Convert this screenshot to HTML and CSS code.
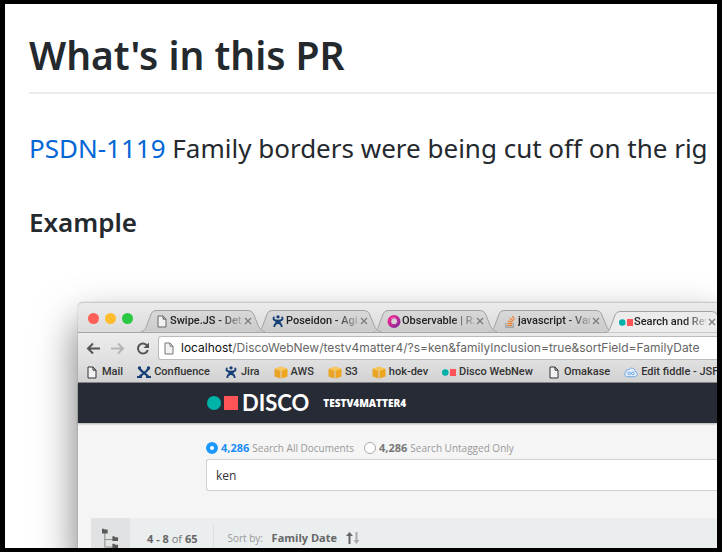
FILE: index.html
```
<!DOCTYPE html>
<html lang="en">
<head>
<meta charset="utf-8">
<title>What's in this PR</title>
<link rel="stylesheet" href="styles.css">
</head>
<body>
<svg class="defs" aria-hidden="true">
  <defs>
    <linearGradient id="tabfill" x1="0" y1="0" x2="0" y2="1"><stop offset="0" stop-color="#d9d9d9"/><stop offset="1" stop-color="#cbcbcb"/></linearGradient>
    <linearGradient id="rx" x1="0" y1="0" x2="1" y2="1"><stop offset="0" stop-color="#f0258f"/><stop offset="1" stop-color="#8a2a9b"/></linearGradient>
  </defs>
  <symbol id="page" viewBox="0 0 10 13"><path d="M1 1h5l3 3.200v7.800H1zM6 1v3.200h3" fill="#f2f2f2" stroke="currentColor" stroke-width="1"/></symbol>
  <symbol id="tab" viewBox="0 0 126 22"><path d="M0 21.500C4 21 4.500 19 6 15L10 4Q11.500.5 15 .5H107Q111 .5 112.500 4L117 15C119 19.500 120 21 124 21.500"/></symbol>
  <symbol id="jira" viewBox="0 0 12 14"><g fill="none" stroke="#173f77" stroke-width="2"><path d="M1 3c0 3 2 3 5 3s5 0 5-3M6 6v3M2 13c0-3 1-4 4-5 3 1 4 2 4 5M3 7l6 3M9 7l-6 3"/></g><circle cx="6" cy="2" r="1.800" fill="#173f77"/><circle cx="1.500" cy="2.500" r="1" fill="#173f77"/><circle cx="10.500" cy="2.500" r="1" fill="#173f77"/></symbol>
  <symbol id="conf" viewBox="0 0 14 13"><path d="M2 1.500c2 5 6 5 10 10M12 1.500C10 7 5 7 2 11.500" fill="none" stroke="#173f77" stroke-width="2.200"/><path d="M0 10h5v2H0zM9 10h5v2H9z" fill="#173f77"/><circle cx="2.500" cy="2" r="1.700" fill="#173f77"/><circle cx="11.500" cy="2" r="1.700" fill="#173f77"/></symbol>
  <symbol id="aws" viewBox="0 0 13 13"><path d="M0 3l6-2v11.500L0 10.500z" fill="#e9a425"/><path d="M7 1l6 2v7.500l-6 2z" fill="#f0a51f"/><path d="M0 3l6.500-2.500L13 3 6.500 5z" fill="#f8c75b"/></symbol>
  <symbol id="dots" viewBox="0 0 14 7"><circle cx="3.300" cy="3.500" r="3.300" fill="#00b0a8"/><path d="M8 0h6v7H8z" fill="#ff5357"/></symbol>
  <symbol id="cross" viewBox="0 0 8 8"><path d="M1 1l6 6M7 1L1 7" stroke="#7b7b7b" stroke-width="1.300"/></symbol>
</svg>
<main class="comment">
  <h1>What's in this PR</h1>
  <p><a href="#psdn-1119">PSDN-1119</a> Family borders were being cut off on the rig</p>
  <h4>Example</h4>
  <section class="window">
    <div class="tabs">
      <div class="lights"><i class="red"></i><i class="amber"></i><i class="green"></i></div>
      <div class="tab"><svg class="shape"><use href="#tab"/></svg><svg class="fav"><use href="#page"/></svg><span class="title">Swipe.JS - Dete</span><button aria-label="Close tab"><svg><use href="#cross"/></svg></button></div>
      <div class="tab"><svg class="shape"><use href="#tab"/></svg><svg class="fav"><use href="#jira"/></svg><span class="title">Poseidon - Agil</span><button aria-label="Close tab"><svg><use href="#cross"/></svg></button></div>
      <div class="tab"><svg class="shape"><use href="#tab"/></svg><svg class="fav" viewBox="0 0 14 14"><circle cx="7" cy="7" r="5" fill="none" stroke="url(#rx)" stroke-width="4"/><path d="M4 4c4-2 6 0 6 4" fill="none" stroke="#f8b6df" stroke-width="1"/><circle cx="7.500" cy="7.500" r="2" fill="#d5d5d5"/></svg><span class="title">Observable | Rx</span><button aria-label="Close tab"><svg><use href="#cross"/></svg></button></div>
      <div class="tab"><svg class="shape"><use href="#tab"/></svg><svg class="fav" viewBox="0 0 12 14"><path d="M1.500 8.500v4.500h8V8.500" fill="none" stroke="#999" stroke-width="1.200"/><path d="M3 11.300h5M3.200 9l5 .6M4 6.200l4.600 1.800M5.700 3.500l3.900 3M8.500 1l2.300 4.200" stroke="#ee7d2c" stroke-width="1.300"/></svg><span class="title">javascript - Var</span><button aria-label="Close tab"><svg><use href="#cross"/></svg></button></div>
      <div class="tab active"><svg class="shape"><use href="#tab"/></svg><svg class="fav"><use href="#dots"/></svg><span class="title">Search and Rev</span><button aria-label="Close tab"><svg><use href="#cross"/></svg></button></div>
    </div>
    <div class="toolbar">
      <button aria-label="Back"><svg viewBox="0 0 14 12"><path d="M7 1L2 6l5 5M2 6h12" fill="none" stroke="#555" stroke-width="2"/></svg></button>
      <button aria-label="Forward"><svg viewBox="0 0 14 12"><path d="M7 1l5 5-5 5M12 6H0" fill="none" stroke="#b5b5b5" stroke-width="2"/></svg></button>
      <button aria-label="Reload"><svg viewBox="0 0 14 13"><path d="M11 3.500A5 5 0 1 0 11.800 8" fill="none" stroke="#555" stroke-width="2"/><path d="M13 .5V6H7.500z" fill="#555"/></svg></button>
      <div class="address"><svg class="page"><use href="#page"/></svg><span><b>localhost</b>/DiscoWebNew/testv4matter4/?s=ken&amp;familyInclusion=true&amp;sortField=FamilyDate</span></div>
    </div>
    <nav class="bookmarks">
      <a href="#mail"><svg><use href="#page"/></svg>Mail</a>
      <a href="#confluence"><svg><use href="#conf"/></svg>Confluence</a>
      <a href="#jira-board"><svg><use href="#jira"/></svg>Jira</a>
      <a href="#aws-console"><svg><use href="#aws"/></svg>AWS</a>
      <a href="#s3"><svg><use href="#aws"/></svg>S3</a>
      <a href="#hok"><svg><use href="#aws"/></svg>hok-dev</a>
      <a href="#disco"><svg><use href="#dots"/></svg>Disco WebNew</a>
      <a href="#omakase"><svg><use href="#page"/></svg>Omakase</a>
      <a href="#fiddle"><svg viewBox="0 0 15 12"><path d="M4 10.500C0 10.500 0 6 2.300 5.500 2 3 4 2.500 5 3.300c2-3.500 7-2 6.700 1.500C15 5.500 15 10.500 11.500 10.500z" fill="#e3eefb" stroke="#68a3e5"/><path d="M7.500 7c-1.500-2-3.500-1.500-3.500 0s2 2 3.500 0 3.500-1.500 3.500 0-2 2-3.500 0z" fill="none" stroke="#68a3e5"/></svg>Edit fiddle - JSFi</a>
    </nav>
    <header class="appbar">
      <svg class="logo" viewBox="0 0 31 14"><circle cx="7" cy="7" r="7" fill="#00b3a9"/><path d="M17 0h14v14H17z" fill="#ff5358"/></svg>
      <span class="brand">DISCO</span><span class="matter">TESTV4MATTER4</span>
    </header>
    <form class="search">
      <div class="scopes">
        <label><input type="radio" name="scope" checked><b class="on">4,286</b> Search All Documents</label>
        <label><input type="radio" name="scope"><b>4,286</b> Search Untagged Only</label>
      </div>
      <input class="query" type="text" value="ken" aria-label="Search">
    </form>
    <div class="results">
      <button class="tree" aria-label="Folders"><svg viewBox="0 0 18 24"><path d="M3 4v15.500h10M3 11.500h9" fill="none" stroke="#888" stroke-width="1"/><path d="M0 0h2l1 1h3v4H0zM11 8h2l1 1h3v4h-6zM11 16h2l1 1h3v4h-6z" fill="#5b5b5b"/></svg></button>
      <span class="count"><b>4 - 8</b> of <b>65</b></span>
      <span class="sort">Sort by: <b>Family Date</b></span>
      <svg class="arrows" viewBox="0 0 14 12"><path d="M3.500 12V3" stroke="#666" stroke-width="2"/><path d="M0 4l3.500-4L7 4z" fill="#666"/><path d="M10.500 0v9" stroke="#aaa" stroke-width="2"/><path d="M7.500 8l3 4 3-4z" fill="#aaa"/></svg>
    </div>
  </section>
</main>
</body>
</html>
```

FILE: styles.css
```
* { box-sizing: border-box; }
body {
  margin: 0;
  height: 100vh;
  overflow: hidden;
  border: solid #000;
  border-width: 4px 5px;
  background: #fff;
  color: #24292e;
  font-family: "Open Sans", sans-serif;
}
.defs { position: absolute; width: 0; height: 0; }
.comment { height: 100%; overflow: hidden; padding: 25px 0 0 24px; }
h1 {
  margin: 0 0 34px;
  padding-bottom: 11px;
  border-bottom: 2px solid #eaecef;
  font: 600 39px/52px "Noto Sans", sans-serif;
}
p { margin: 0 0 38px; font: 26px/40px "Noto Sans", sans-serif; white-space: nowrap; }
p a { color: #0366d6; text-decoration: none; }
h4 { margin: 0 0 64px; font: 600 26px/32px "Noto Sans", sans-serif; }
button { display: flex; border: 0; padding: 0; background: none; }

.window {
  margin-left: 49px;
  border-radius: 5px 0 0 0;
  background: #f5f5f5;
  box-shadow: 0 0 1px rgba(0,0,0,.5), 0 20px 40px rgba(0,0,0,.55);
}
.tabs {
  display: flex;
  align-items: flex-end;
  height: 31px;
  border-top: 1px solid #ccc;
  border-bottom: 1px solid #a5a5a5;
  border-radius: 5px 0 0 0;
  background: linear-gradient(#ebebeb, #dcdcdc);
}
.lights { display: flex; flex: none; gap: 6px; width: 63px; padding: 0 0 8px 10px; }
.lights i { width: 11px; height: 11px; border-radius: 50%; }
.red { background: #ff5f57; }
.amber { background: #ffbd2e; }
.green { background: #28c940; }
.tab {
  position: relative;
  display: flex;
  flex: none;
  align-items: center;
  width: 116px;
  height: 22px;
  padding-left: 14px;
  font: 500 11px/20px Roboto, sans-serif;
  color: #222;
}
.tab:nth-child(2) { z-index: 5; }
.tab:nth-child(3) { z-index: 4; }
.tab:nth-child(4) { z-index: 3; }
.tab:nth-child(5) { z-index: 2; }
.tab.active { z-index: 6; margin-bottom: -1px; }
.shape { position: absolute; left: 0; top: 0; z-index: -1; width: 126px; height: 22px; fill: url(#tabfill); stroke: #a2a2a2; }
.active .shape { fill: #ececec; }
.fav { flex: none; width: 14px; height: 13px; color: #666; }
.title {
  width: 72px;
  overflow: hidden;
  margin-left: 1px;
  white-space: nowrap;
  mask-image: linear-gradient(90deg, #000 50px, transparent 76px);
}
.tab button { margin-left: 2px; }
.tab button svg { width: 8px; height: 8px; }

.toolbar { display: flex; align-items: center; gap: 11px; padding: 3px 0 2px 8px; background: linear-gradient(#ececec, #dfdfdf); }
.toolbar button svg { width: 14px; height: 13px; }
.address {
  display: flex;
  flex: 1;
  align-items: center;
  gap: 7px;
  min-width: 0;
  height: 24px;
  margin-left: -3px;
  padding-left: 5px;
  border: 1px solid #bbb;
  border-right: 0;
  border-radius: 3px 0 0 3px;
  background: #fff;
  color: #666;
  font: 12px/20px Inter, sans-serif;
  white-space: nowrap;
}
.address b { font-weight: 400; color: #111; }
.page { width: 10px; height: 13px; color: #777; }
.bookmarks {
  display: flex;
  gap: 14px;
  height: 21px;
  overflow: hidden;
  padding-left: 7px;
  border-bottom: 1px solid #888;
  background: linear-gradient(#dfdfdf, #d2d2d2);
  font: 500 11px/18px Roboto, sans-serif;
}
.bookmarks a { display: flex; flex: none; align-items: center; gap: 3px; color: #333; text-decoration: none; }
.bookmarks svg { width: 14px; height: 13px; }

.appbar {
  display: flex;
  align-items: center;
  height: 40px;
  padding-left: 129px;
  background: #272b35;
  color: #fff;
  box-shadow: 0 1px 2px rgba(0,0,0,.3);
}
.logo { width: 31px; height: 14px; }
.brand { margin-left: 4px; font: 700 22px/26px Lato, sans-serif; }
.matter { margin-left: 14px; font-size: 10px; font-weight: 800; }
.search { padding: 17px 0 27px 128px; }
.scopes { display: flex; gap: 10px; color: #999; font-size: 10px; line-height: 16px; white-space: nowrap; }
.scopes label { display: flex; align-items: center; gap: 3px; }
.scopes b { color: #777; font-size: 11px; }
.scopes .on { color: #1c8df5; }
.scopes input { appearance: none; width: 12px; height: 12px; margin: 0; border: 1px solid #aaa; border-radius: 50%; background: #fff; }
.scopes input:checked { border: 4px solid #1c98fb; }
.query {
  display: block;
  width: 100%;
  height: 32px;
  margin-top: 3px;
  padding: 0 9px;
  border: 1px solid #d0d0d0;
  border-right: 0;
  border-radius: 3px 0 0 3px;
  background: #fff;
  color: #333;
  font: 12px/20px "Open Sans", sans-serif;
}
.results {
  display: flex;
  align-items: center;
  height: 40px;
  margin-left: 13px;
  background: #eaeeef;
  color: #777;
  font-size: 11px;
  white-space: nowrap;
}
.results b { color: #666; }
.tree { width: 39px; height: 100%; padding: 10px 11px; background: #e0e2e3; }
.tree svg { width: 18px; height: 24px; }
.count { margin-left: 17px; }
.sort { margin-left: 16px; padding-left: 13px; border-left: 1px solid #dde0e1; line-height: 28px; color: #999; font-size: 10px; }
.sort b { margin-left: 6px; font-size: 11px; }
.arrows { width: 14px; height: 12px; margin-left: 9px; }
```
